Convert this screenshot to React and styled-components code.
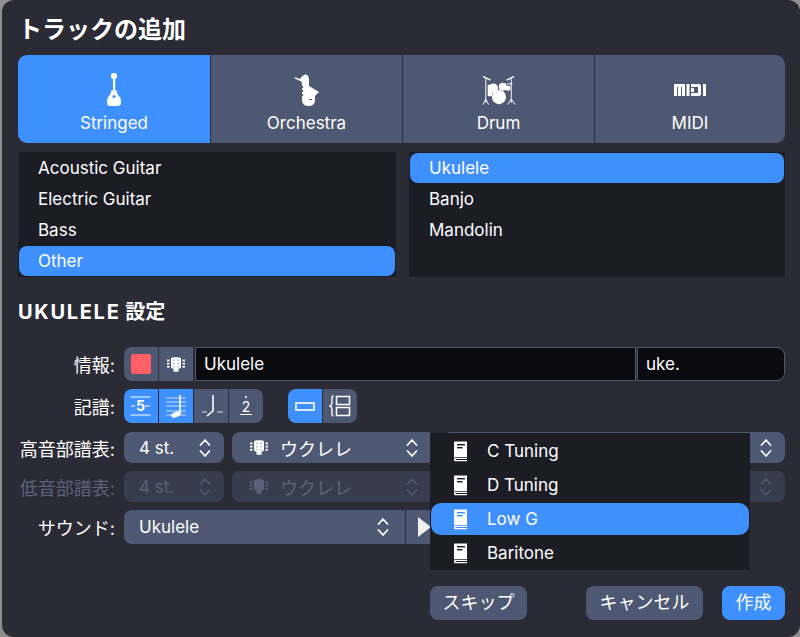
import React from 'react'
import styled, { createGlobalStyle } from 'styled-components'

const GlobalStyle = createGlobalStyle`
  html, body {
    margin: 0;
    padding: 0;
    height: 100%;
    background: #8f8f8f;
  }
  body {
    overflow: hidden;
    font-family: Inter, "Noto Sans CJK JP", sans-serif;
    color: #fff;
  }
`

const BLUE = '#3f90ff'
const SLATE = '#4e5872'

function Ukulele() {
  return (
    <svg width="14" height="33" viewBox="0 0 14 33">
      <rect x="4" y="0" width="6" height="6" rx="2.5" fill="#fff" />
      <rect x="6" y="5" width="2.2" height="15" fill="#fff" />
      <path fill="#fff" d="M4 18 C4 17 10 17 10 18 C10 20 10.5 21.5 12 23 C13.5 24.5 14 26 14 28 L14 30 C14 32 12.5 33 11 33 L3 33 C1.5 33 0 32 0 30 L0 28 C0 26 0.5 24.5 2 23 C3.5 21.5 4 20 4 18 Z" />
      <circle cx="7" cy="23.5" r="1.6" fill={BLUE} />
    </svg>
  )
}

function Sax() {
  return (
    <svg width="26" height="32" viewBox="0 0 26 32">
      <path fill="#fff" d="M0.5 3 L6 5 C7.5 2.5 10 0.5 12 0.5 C14 1 15 3.5 15 6 L15 12 L25 18 L21 22 L21 26 C21 30 18 32 15 32 C11 32 8 30 8 26 L8 11 C8 9 7.5 7 6 7 L1 4.5 Z" />
      <g fill={SLATE}>
        <circle cx="8.4" cy="13" r="0.9" />
        <circle cx="8.4" cy="17" r="0.9" />
        <circle cx="8.4" cy="21" r="0.9" />
        <rect x="15" y="25" width="3" height="1" />
      </g>
    </svg>
  )
}

function Drums() {
  return (
    <svg width="34" height="31" viewBox="0 0 36 32">
      <g stroke="#fff" strokeWidth="1" fill="none">
        <path d="M1 1 L9 5" strokeWidth="1.4" />
        <path d="M26 5 L34 1" strokeWidth="1.4" />
        <path d="M4 3 V29 M1 31 L4 25 L7 31" />
        <path d="M31 3 V29 M27 31 L31 25 L35 31" />
        <path d="M26 9 H32" />
      </g>
      <rect x="6" y="10" width="5" height="12" rx="1" fill="#fff" />
      <circle cx="12" cy="13.5" r="5" fill="#fff" />
      <circle cx="22" cy="12" r="4.2" fill="#fff" />
      <rect x="25" y="11" width="5" height="5" rx="1" fill="#fff" />
      <circle cx="18" cy="23" r="7.5" fill="#fff" />
    </svg>
  )
}

function MidiLogo() {
  return (
    <svg width="32" height="12" viewBox="0 0 32 12" fill="#fff">
      <path d="M0 0 H11 V12 H8 V3 H7 V12 H4 V3 H3 V12 H0 Z" />
      <rect x="12.5" y="0" width="3" height="12" />
      <path d="M17 0 H25 C26.5 0 27 1 27 2 V10 C27 11 26.5 12 25 12 H17 V9 H24 V3 H17 Z" />
      <rect x="17" y="4" width="3" height="4" />
      <rect x="29" y="0" width="3" height="12" />
    </svg>
  )
}

function Headstock({ color = '#fff' }) {
  return (
    <svg width="20" height="15" viewBox="0 0 20 15" fill={color}>
      <path d="M5 1.5 C5 0.8 7 0.3 10 0.3 C13 0.3 15 0.8 15 1.5 L15 10 C15 11 13.5 11.5 12.5 12 L12.5 14.8 L7.5 14.8 L7.5 12 C6.5 11.5 5 11 5 10 Z" />
      <rect x="1" y="2.5" width="2.5" height="1.8" />
      <rect x="1" y="5.7" width="2.5" height="1.8" />
      <rect x="1" y="8.9" width="2.5" height="1.8" />
      <rect x="16.5" y="2.5" width="2.5" height="1.8" />
      <rect x="16.5" y="5.7" width="2.5" height="1.8" />
      <rect x="16.5" y="8.9" width="2.5" height="1.8" />
      <g fill={SLATE} opacity="0.5">
        <circle cx="8" cy="3.4" r="0.8" />
        <circle cx="12" cy="3.4" r="0.8" />
        <circle cx="8" cy="6.6" r="0.8" />
        <circle cx="12" cy="6.6" r="0.8" />
        <circle cx="8" cy="9.8" r="0.8" />
        <circle cx="12" cy="9.8" r="0.8" />
      </g>
    </svg>
  )
}

function Stepper({ color = '#fff' }) {
  return (
    <svg width="12" height="20" viewBox="0 0 12 20" fill="none" stroke={color} strokeWidth="1.7" strokeLinecap="round" strokeLinejoin="round">
      <path d="M1.5 7 L6 2 L10.5 7" />
      <path d="M1.5 13 L6 18 L10.5 13" />
    </svg>
  )
}

function BookIcon({ ink }) {
  return (
    <svg width="15" height="21" viewBox="0 0 15 21">
      <path fill="#fff" d="M1 1.5 C1 0.8 1.5 0.5 2 0.5 H14 V16 H2.5 C1.8 16 1.2 16.3 1 16.8 Z" />
      <path fill="#fff" d="M1 17.5 C1 17 1.6 16.8 2.5 16.8 H14 V18 H2.5 V19 H14 V20.2 H2 C1.3 20.2 1 19.7 1 19 Z" />
      <rect x="4" y="3" width="8" height="1.4" fill={ink} />
      <rect x="4" y="6" width="5.5" height="1.4" fill={ink} />
    </svg>
  )
}

function StaffFive() {
  return (
    <svg width="28" height="28" viewBox="0 0 28 28" stroke="#fff" strokeWidth="1">
      <path d="M3.5 5 H23.5 M3.5 23 H23.5 M4 14 H8 M18 14 H23" />
      <NumeralSvg x="13.5" y="19" fontSize="14" stroke="none" $weight={700}>5</NumeralSvg>
    </svg>
  )
}

function StaffNote() {
  return (
    <svg width="28" height="30" viewBox="0 0 28 30" fill="none" stroke="#fff">
      <path d="M4 7 H24 M4 11 H24 M4 15 H24 M4 20 H24 M4 24 H24" strokeWidth="1" opacity="0.7" />
      <path d="M18 4 V23" strokeWidth="1.6" />
      <ellipse cx="14" cy="23.5" rx="5" ry="2.6" fill="#fff" stroke="none" transform="rotate(-20 14 23.5)" />
    </svg>
  )
}

function FlagNote() {
  return (
    <svg width="28" height="28" viewBox="0 0 28 28" fill="none" stroke="#fff">
      <path d="M16 3 V19 L10 24" strokeWidth="1.6" />
      <path d="M5 20 H10 M20 20 H26" strokeWidth="1" opacity="0.8" />
    </svg>
  )
}

function FretNumber() {
  return (
    <svg width="20" height="28" viewBox="0 0 20 28" stroke="#fff">
      <circle cx="10" cy="5" r="1.1" fill="#fff" stroke="none" />
      <NumeralSvg x="10" y="20" fontSize="14" stroke="none" $weight={400}>2</NumeralSvg>
      <path d="M4 22.5 H16" strokeWidth="1.2" />
    </svg>
  )
}

function SingleStaff() {
  return (
    <svg width="20" height="9" viewBox="0 0 20 9" fill="none" stroke="#fff" strokeWidth="1.6">
      <rect x="1" y="1" width="18" height="7" />
    </svg>
  )
}

function GrandStaff() {
  return (
    <svg width="22" height="22" viewBox="0 0 22 22" fill="none" stroke="#fff" strokeWidth="1.5">
      <path d="M4.5 1 C2.5 1 3 3 3 6 C3 9.5 2.5 10.5 1 11 C2.5 11.5 3 12.5 3 16 C3 19 2.5 21 4.5 21" strokeWidth="1.4" />
      <rect x="7.5" y="1.5" width="13" height="8" />
      <rect x="7.5" y="12.5" width="13" height="8" />
    </svg>
  )
}

export default function App() {
  return (
    <Window>
      <GlobalStyle />
      <Title>トラックの追加</Title>
      <Tabs>
        <Tab $active><Ukulele /><TabLabel>Stringed</TabLabel></Tab>
        <Tab><Sax /><TabLabel>Orchestra</TabLabel></Tab>
        <Tab><Drums /><TabLabel>Drum</TabLabel></Tab>
        <Tab><MidiBox><MidiLogo /></MidiBox><TabLabel>MIDI</TabLabel></Tab>
      </Tabs>
      <Lists>
        <List>
          <ListRow>Acoustic Guitar</ListRow>
          <ListRow>Electric Guitar</ListRow>
          <ListRow>Bass</ListRow>
          <ListRow $selected>Other</ListRow>
        </List>
        <List>
          <ListRow $selected>Ukulele</ListRow>
          <ListRow>Banjo</ListRow>
          <ListRow>Mandolin</ListRow>
        </List>
      </Lists>
      <SectionTitle><SectionName>UKULELE</SectionName> 設定</SectionTitle>
      <Form>
        <FormRow>
          <Label>情報:</Label>
          <SegGroup $open>
            <Seg><Swatch /></Seg>
            <Seg><Headstock /></Seg>
          </SegGroup>
          <NameField>Ukulele</NameField>
          <ShortField>uke.</ShortField>
        </FormRow>
        <FormRow>
          <Label>記譜:</Label>
          <SegGroup>
            <Seg $active><StaffFive /></Seg>
            <Seg $active><StaffNote /></Seg>
            <Seg><FlagNote /></Seg>
            <Seg><FretNumber /></Seg>
          </SegGroup>
          <SegGroup $push>
            <Seg $active><SingleStaff /></Seg>
            <Seg><GrandStaff /></Seg>
          </SegGroup>
        </FormRow>
        <FormRow $short $offset>
          <Label>高音部譜表:</Label>
          <Select $w={100}>4 st.<Stepper /></Select>
          <Select $w={203} $endPad={17}>
            <SelectMain><Headstock />ウクレレ</SelectMain>
            <Stepper />
          </Select>
          <Select $grow><span /><Stepper /></Select>
        </FormRow>
        <FormRow $short>
          <Label $disabled>低音部譜表:</Label>
          <Select $w={100} $disabled>4 st.<Stepper color="#4e5872" /></Select>
          <Select $w={203} $endPad={17} $disabled>
            <SelectMain><Headstock color="#5b6379" />ウクレレ</SelectMain>
            <Stepper color="#4e5872" />
          </Select>
          <Select $grow $disabled><span /><Stepper color="#4e5872" /></Select>
        </FormRow>
        <FormRow>
          <Label>サウンド:</Label>
          <SoundSelect>Ukulele<Stepper /></SoundSelect>
          <PlayButton><PlayGlyph /></PlayButton>
        </FormRow>
      </Form>
      <Footer>
        <FootButton $skip>スキップ</FootButton>
        <FootButton>キャンセル</FootButton>
        <FootButton $primary>作成</FootButton>
      </Footer>
      <Menu>
        <MenuRow><BookIcon ink="#1c1c25" />C Tuning</MenuRow>
        <MenuRow><BookIcon ink="#1c1c25" />D Tuning</MenuRow>
        <MenuRow $selected><BookIcon ink={BLUE} />Low G</MenuRow>
        <MenuRow><BookIcon ink="#1c1c25" />Baritone</MenuRow>
      </Menu>
    </Window>
  )
}

const Window = styled.div`
  position: relative;
  box-sizing: border-box;
  width: 798px;
  height: 637px;
  margin-left: 2px;
  padding: 0 15px 0 16px;
  background: #2b2b36;
  border-radius: 12px;
  overflow: hidden;
`

const Title = styled.h1`
  margin: 0;
  height: 55px;
  line-height: 60px;
  font-size: 24px;
  font-weight: 700;
`

const Tabs = styled.div`
  display: grid;
  grid-template-columns: 192px 191px 191px 1fr;
  gap: 1px;
  height: 88px;
  border-radius: 9px;
  overflow: hidden;
`

const Tab = styled.div`
  display: flex;
  flex-direction: column;
  align-items: center;
  justify-content: flex-end;
  gap: 7px;
  padding-bottom: 9px;
  background: ${p => (p.$active ? BLUE : SLATE)};
`

const TabLabel = styled.span`
  font-size: 17px;
  line-height: 21px;
`

const MidiBox = styled.div`
  height: 32px;
  display: flex;
  align-items: center;
`

const Lists = styled.div`
  display: grid;
  grid-template-columns: 378px 376px;
  gap: 13px;
  margin-top: 9px;
`

const List = styled.div`
  display: flex;
  flex-direction: column;
  gap: 1px;
  height: 125px;
  box-sizing: border-box;
  padding: 1px;
  background: #1c1c25;
`

const ListRow = styled.div`
  height: 30px;
  line-height: 30px;
  padding-left: 19px;
  font-size: 17px;
  border-radius: 8px;
  background: ${p => (p.$selected ? BLUE : 'transparent')};
`

const SectionTitle = styled.h2`
  margin: 23px 0 0;
  height: 24px;
  line-height: 24px;
  font-size: 20px;
  font-weight: 700;
`

const SectionName = styled.span`
  letter-spacing: 1.7px;
`

const Form = styled.div`
  display: flex;
  flex-direction: column;
  gap: 8px;
  margin-top: 23px;
`

const FormRow = styled.div`
  display: flex;
  align-items: center;
  height: ${p => (p.$short ? 31 : 34)}px;
  margin-top: ${p => (p.$offset ? 1 : 0)}px;
`

const Label = styled.label`
  flex: 0 0 97px;
  min-width: 0;
  margin-right: 9px;
  text-align: right;
  font-size: 18px;
  white-space: nowrap;
  color: ${p => (p.$disabled ? '#5b6379' : '#fff')};
`

const SegGroup = styled.div`
  display: flex;
  gap: 1px;
  height: 34px;
  margin-left: ${p => (p.$push ? 25 : 0)}px;
  border-radius: ${p => (p.$open ? '8px 0 0 8px' : '8px')};
  overflow: hidden;
`

const Seg = styled.div`
  display: flex;
  align-items: center;
  justify-content: center;
  width: 34px;
  background: ${p => (p.$active ? BLUE : SLATE)};
`

const Swatch = styled.div`
  width: 20px;
  height: 20px;
  border-radius: 2px;
  background: #ff5f66;
`

const NameField = styled.div`
  box-sizing: border-box;
  width: 441px;
  height: 34px;
  line-height: 32px;
  margin-left: 2px;
  padding-left: 8px;
  font-size: 17px;
  background: #0a0a0f;
  border: 1.5px solid ${SLATE};
`

const ShortField = styled(NameField)`
  flex: 1;
  width: auto;
  margin-left: 1px;
  border-radius: 0 8px 8px 0;
`

const Select = styled.div`
  box-sizing: border-box;
  display: flex;
  align-items: center;
  justify-content: space-between;
  flex: ${p => (p.$grow ? '1' : `0 0 ${p.$w}px`)};
  height: 31px;
  margin-right: ${p => (p.$grow ? 0 : 8)}px;
  padding: 0 ${p => p.$endPad || 13}px 0 15px;
  font-size: 17px;
  border-radius: 8px;
  background: ${p => (p.$disabled ? '#383c4f' : SLATE)};
  color: ${p => (p.$disabled ? '#5b6379' : '#fff')};
`

const SelectMain = styled.span`
  display: flex;
  align-items: center;
  gap: 11px;
  font-size: 18px;
  margin-left: 2px;
`

const SoundSelect = styled(Select)`
  flex: 0 0 281px;
  height: 34px;
  margin-right: 1px;
  padding-right: 16px;
  border-radius: 8px 0 0 8px;
`

const PlayButton = styled.div`
  display: flex;
  align-items: center;
  width: 30px;
  height: 34px;
  padding-left: 12px;
  box-sizing: border-box;
  background: ${SLATE};
`

const PlayGlyph = styled.div`
  width: 0;
  height: 0;
  border-style: solid;
  border-width: 10px 0 10px 13px;
  border-color: transparent transparent transparent #f0f0f0;
`

const Footer = styled.div`
  display: flex;
  justify-content: flex-end;
  gap: 19px;
  margin-top: 42px;
`

const FootButton = styled.div`
  height: 34px;
  line-height: 34px;
  padding: 0 ${p => (p.$skip ? 12.5 : 13.5)}px;
  margin-right: ${p => (p.$skip ? 40 : 0)}px;
  font-size: 18px;
  border-radius: 8px;
  background: ${p => (p.$primary ? BLUE : SLATE)};
`

const Menu = styled.div`
  position: absolute;
  left: 428px;
  top: 433px;
  width: 320px;
  height: 137px;
  box-sizing: border-box;
  padding: 1.5px 1px 0;
  display: flex;
  flex-direction: column;
  justify-content: space-around;
  background: #1c1c25;
`

const MenuRow = styled.div`
  display: flex;
  align-items: center;
  gap: 19px;
  height: 32px;
  padding-left: 22px;
  font-size: 17px;
  border-radius: 10px;
  background: ${p => (p.$selected ? BLUE : 'transparent')};
`

const NumeralSvg = styled.text.attrs({ textAnchor: 'middle' })`
  fill: #fff;
  font-family: Inter, sans-serif;
  font-weight: ${p => p.$weight};
`
